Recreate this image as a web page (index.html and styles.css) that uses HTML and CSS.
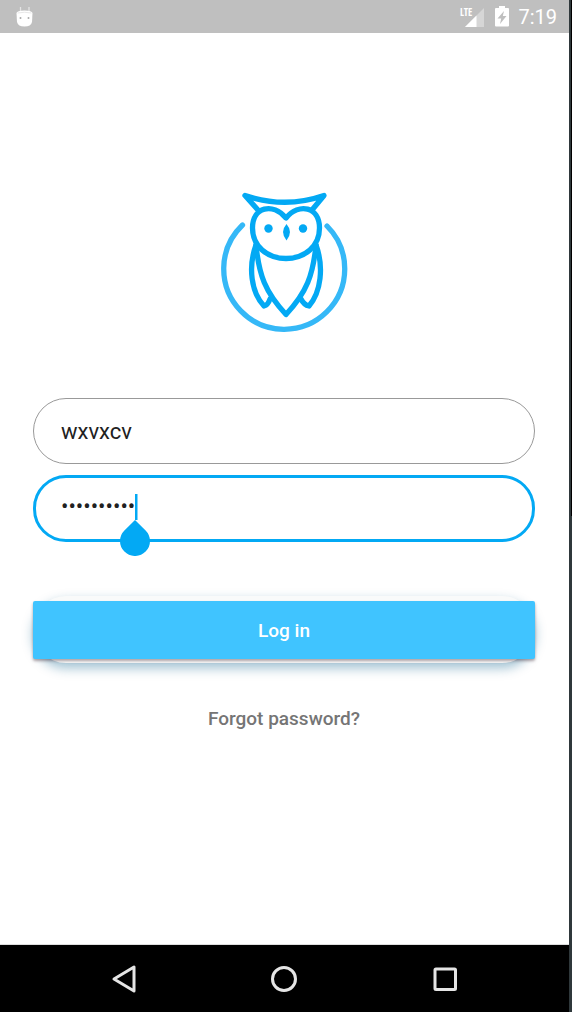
FILE: index.html
```html
<!DOCTYPE html>
<html lang="en">
<head>
<meta charset="utf-8">
<meta name="viewport" content="width=device-width, initial-scale=1">
<title>Log in</title>
<link rel="stylesheet" href="styles.css">
</head>
<body>
<div class="device">
  <div class="screen">
    <header class="status">
      <svg class="status-robot" width="20" height="22" viewBox="0 0 20 22" aria-hidden="true">
        <path d="M5.500 1v5M14 1v5" stroke="#e4e4e4" stroke-width="1.300"/>
        <path d="M1.500 7Q2 4.500 9.500 4.500T17.500 7L17 16Q16 20.500 9.500 20.500T2 16Z" fill="#fff"/>
        <path d="M2.500 7Q9.500 5.500 16.500 7" fill="none" stroke="#e8e8e8"/>
        <circle cx="5.500" cy="12" r="1" fill="#aaa"/><circle cx="13.500" cy="12" r="1" fill="#aaa"/>
      </svg>
      <div class="status-right">
        <svg width="26" height="22" viewBox="0 0 26 22" aria-hidden="true">
          <path d="M25 2V21H6Z" fill="#d6d6d6"/><path d="M17.500 9.500V21H6Z" fill="#fff"/>
          <path d="M0 0H14V11H0Z" fill="#bfbfbf"/>
          <text class="lte" x="1" y="10">LTE</text>
        </svg>
        <svg class="battery" width="14" height="21" viewBox="0 0 14 21" aria-hidden="true">
          <path d="M4 0h6v2h3a1 1 0 0 1 1 1v16.500a1 1 0 0 1-1 1H1a1 1 0 0 1-1-1V3a1 1 0 0 1 1-1h3Z" fill="#fff"/>
          <path d="M9 5L2.500 12.500H6.200L5 18L11.500 10H7.800Z" fill="#bfbfbf"/>
        </svg>
        <time class="clock">7:19</time>
      </div>
    </header>
    <main class="content">
      <svg class="logo" width="128" height="140" viewBox="0 0 128 140" role="img" aria-label="Owl">
        <g fill="none" stroke="#03a9f4" stroke-width="5.300" stroke-linecap="round" stroke-linejoin="round">
          <path d="M22.500 33A60.500 60.500 0 1 0 107 34" stroke="#35b8f7"/>
          <path d="M38 18L25 3.500Q65 17 104 3.500L92 18"/>
          <path d="M66 26C53 10 32.500 15 32.500 36C32.500 54 47 66.500 66 66.500S99.500 54 99.500 36C99.500 15 79 10 66 26Z"/>
          <path d="M36 53C39 83 45 100 66 122.500C87 100 93 83 96 53"/>
          <path d="M36 53C28 75 31 100 44 114Q48 113 50 107"/>
          <path d="M96 53C104 75 101 100 89 114Q84 113 81 107"/>
        </g>
        <g fill="#03a9f4"><circle cx="48.500" cy="36.500" r="4.200"/><circle cx="83" cy="36.500" r="4.200"/><path d="M66.500 32Q73.500 40 66.500 48.500Q59.500 40 66.500 32Z"/></g>
      </svg>
      <form class="form">
        <input class="field" type="text" aria-label="Username" value="wxvxcv">
        <div class="password">
          <input class="field field-active" type="password" aria-label="Password" value="password12">
          <svg class="cursor" width="32" height="62" viewBox="0 0 32 62" aria-hidden="true">
            <path d="M16 0h2.500v26H16Z" fill="#03a9f4"/>
            <path d="M16 26L26.600 36.400A15 15 0 1 1 5.400 36.400Z" fill="#03a9f4"/>
          </svg>
        </div>
        <div class="action"><button class="login" type="button">Log in</button></div>
      </form>
      <a class="forgot" href="#">Forgot password?</a>
    </main>
    <nav class="navbar" aria-label="System">
      <button class="nav-button" type="button" aria-label="Back"><svg width="28" height="30" viewBox="0 0 28 30"><path d="M24 3V27L4 15Z"/></svg></button>
      <button class="nav-button" type="button" aria-label="Home"><svg width="28" height="30" viewBox="0 0 28 30"><circle cx="14" cy="15" r="11.500"/></svg></button>
      <button class="nav-button" type="button" aria-label="Recent apps"><svg width="28" height="30" viewBox="0 0 28 30"><rect x="4" y="5" width="20.500" height="20.500" rx="1"/></svg></button>
    </nav>
  </div>
  <div class="edge"></div>
</div>
</body>
</html>
```
FILE: styles.css
```css
* { box-sizing: border-box; }

body {
  margin: 0;
  font-family: Roboto, "Liberation Sans", sans-serif;
  background: #fff;
}

.device {
  min-height: 100vh;
  display: flex;
}

.edge {
  width: 3px;
  background: linear-gradient(#000, #000) right top / 1px 51% no-repeat #2f383b;
}

.screen {
  flex: 1;
  display: flex;
  flex-direction: column;
}

.status {
  height: 33px;
  padding: 0 12px 0 15px;
  display: flex;
  align-items: center;
  justify-content: space-between;
  background: #bfbfbf;
  color: #fff;
}

.status-right { display: flex; align-items: center; }

.lte {
  font: 700 11px "Liberation Sans Narrow", "Open Sans Condensed", "DejaVu Sans Condensed", sans-serif;
  font-size: 10px;
  fill: #fff;
}

.battery { margin: 0 9px 0 10px; }

.clock {
  font-size: 20px;
  line-height: 34px;
}

.content {
  flex: 1;
  padding: 159px 34px 0 33px;
  display: flex;
  flex-direction: column;
  align-items: center;
}

.logo { display: block; }

.form {
  width: 100%;
  margin-top: 66px;
}

.field {
  display: block;
  width: 100%;
  height: 66px;
  padding: 0 27px;
  border: 1px solid #999;
  border-radius: 33px;
  outline: 0;
  background: #fff;
  color: #212121;
  font: 400 22px Roboto, sans-serif;
}

.password {
  position: relative;
  margin-top: 11px;
}

.field-active {
  height: 67px;
  padding: 0 25px 4px;
  border: 3px solid #03a9f4;
}

.cursor {
  position: absolute;
  left: 86px;
  top: 19px;
}

.action {
  margin-top: 54px;
  padding: 5px 0 4px;
  border-radius: 33px;
  background: #f9fafa;
  box-shadow: 0 5px 12px rgba(3, 90, 135, 0.38);
}

.login {
  display: block;
  width: 100%;
  height: 58px;
  border: 0;
  border-radius: 2px;
  background: #40c4ff;
  box-shadow: 0 2px 3px rgba(60, 30, 40, 0.4);
  color: #fff;
  font: 500 19px Roboto, sans-serif;
}

.forgot {
  margin-top: 44px;
  color: #757575;
  font-size: 19px;
  line-height: 24px;
  font-weight: 500;
  text-decoration: none;
}

.navbar {
  height: 68px;
  padding: 0 44px;
  display: flex;
  align-items: center;
  border-top: 1px solid #ddd;
  background: #000;
}

.nav-button {
  flex: 1;
  padding: 0;
  border: 0;
  background: transparent;
}

.nav-button svg {
  display: block;
  margin: auto;
  fill: none;
  stroke: #e5e5e5;
  stroke-width: 3;
  stroke-linejoin: round;
}
```
